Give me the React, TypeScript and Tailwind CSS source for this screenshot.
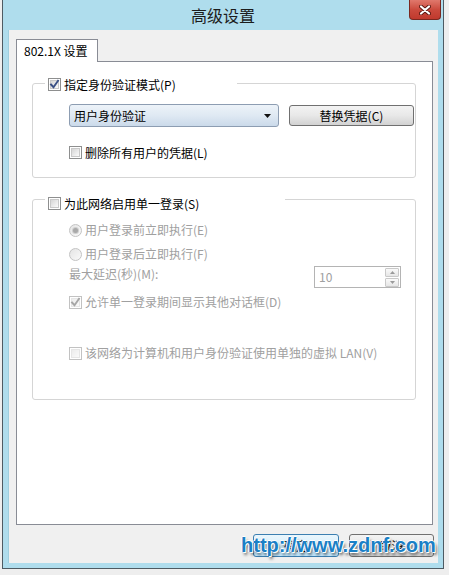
import React from "react";

function Check({ checked = false, disabled = false }: { checked?: boolean; disabled?: boolean }) {
  return (
    <span
      className={`relative inline-block w-[13px] h-[13px] shrink-0 border bg-white ${
        disabled ? "border-[#c2c2c2]" : "border-[#8e8f8f]"
      }`}
    >
      <span
        className={`absolute inset-[1px] border ${
          disabled
            ? "border-[#e6e6e6] bg-gradient-to-br from-[#ececec] to-[#fafafa]"
            : "border-[#c9c9c9] bg-gradient-to-br from-[#d6d6d6] to-[#fbfbfb]"
        }`}
      />
      {checked && (
        <svg className="absolute inset-0" width="11" height="11" viewBox="0 0 11 11">
          <path
            d="M2 5.5 L4.5 8.2 L9 1.8"
            fill="none"
            stroke={disabled ? "#a6a6a6" : "#3a5085"}
            strokeWidth="1.9"
            strokeLinecap="square"
          />
        </svg>
      )}
    </span>
  );
}

function Radio({ checked = false }: { checked?: boolean }) {
  return (
    <span className="relative inline-block w-[13px] h-[13px] shrink-0 rounded-full border border-[#c3c3c3] bg-gradient-to-br from-[#e4e4e4] to-[#fafafa]">
      {checked && (
        <span className="absolute left-[3px] top-[3px] w-[5px] h-[5px] rounded-full bg-[#a9a9a9] ring-1 ring-[#cfcfcf]" />
      )}
    </span>
  );
}

export default function App() {
  return (
    <div className="w-[449px] h-[575px] bg-[#eeeeee] overflow-hidden [font-family:'Noto_Sans_CJK_SC',sans-serif] text-[12px] leading-[16px] text-black">
      <div className="relative ml-[2px] w-[442px] h-[569px] border-x border-b border-[#4e5b63] bg-[#afdded] flex flex-col px-[5px] pb-[5px]">
        {/* title bar */}
        <div className="h-[30px] shrink-0 flex items-center justify-center text-[16px] leading-[20px] text-[#1c1c1c]">
          高级设置
        </div>
        <div className="absolute top-0 right-[2px] w-[32px] h-[20px] rounded-b-[4px] border border-t-0 border-[#7a2820] bg-gradient-to-b from-[#e0786c] via-[#cb4a3d] to-[#c0392d] flex items-center justify-center">
          <svg width="12" height="10" viewBox="0 0 12 10">
            <path d="M2 1.5 L10 8.5 M10 1.5 L2 8.5" stroke="#5b1710" strokeWidth="4" strokeLinecap="round" />
            <path d="M2 1.5 L10 8.5 M10 1.5 L2 8.5" stroke="#ffffff" strokeWidth="2.2" strokeLinecap="round" />
          </svg>
        </div>

        {/* client area */}
        <div className="flex-1 bg-[#f0f0f0] flex flex-col pl-[7px] pr-[5px] pt-[9px] pb-[6px] border-l border-[#9fcfdf]">
          {/* tab header */}
          <div className="flex">
            <div className="relative z-10 -mb-[1px] h-[23px] w-[82px] border border-b-0 border-[#898c95] bg-white flex items-center pl-[7px]">
              802.1X 设置
            </div>
          </div>
          {/* tab panel */}
          <div className="h-[464px] border border-[#898c95] bg-white pl-[15px] pr-[16px] pt-[21px]">
            {/* group 1 */}
            <div className="relative h-[95px] border border-[#d5d5d5] rounded-[3px] pt-[20px] pl-[36px]">
              <div className="absolute left-[12px] top-[-6px] w-[192px] h-[13px] bg-white pl-[3px] flex items-center gap-[3px]">
                <Check checked />
                <span>指定身份验证模式(P)</span>
              </div>
              <div className="flex items-center gap-[10px] h-[23px]">
                <div className="relative w-[210px] h-[23px] rounded-[3px] border border-[#8d9db2] bg-gradient-to-b from-[#edf3f9] via-[#dfe9f3] to-[#cbdaea] flex items-center pl-[4px]">
                  <span>用户身份验证</span>
                  <svg className="absolute right-[7px] top-[9px]" width="7" height="4" viewBox="0 0 7 4">
                    <path d="M0 0 H7 L3.5 4 Z" fill="#111" />
                  </svg>
                </div>
                <div className="w-[125px] h-[21px] rounded-[3px] border border-[#707070] bg-gradient-to-b from-[#f3f3f3] via-[#e8e8e8] to-[#d2d2d2] flex items-center justify-center">
                  替换凭据(C)
                </div>
              </div>
              <div className="mt-[19px] h-[13px] flex items-center gap-[3px]">
                <Check />
                <span>删除所有用户的凭据(L)</span>
              </div>
            </div>

            {/* group 2 */}
            <div className="relative mt-[21px] h-[201px] border border-[#d5d5d5] rounded-[3px] pt-[22px] pl-[36px] pr-[14px] text-[#a0a0a0]">
              <div className="absolute left-[12px] top-[-3px] w-[240px] h-[13px] bg-white pl-[3px] flex items-center gap-[3px] text-black">
                <Check />
                <span>为此网络启用单一登录(S)</span>
              </div>
              <div className="h-[16px] flex items-center gap-[3px]">
                <Radio checked />
                <span>用户登录前立即执行(E)</span>
              </div>
              <div className="mt-[8px] h-[16px] flex items-center gap-[3px]">
                <Radio />
                <span>用户登录后立即执行(F)</span>
              </div>
              <div className="mt-[4px] flex items-start justify-between">
                <span className="h-[16px]">最大延迟(秒)(M):</span>
                <div className="w-[87px] h-[22px] border border-[#b4b4b4] bg-white flex items-center pl-[4px] pr-[1px]">
                  <span className="flex-1 text-[#a0a0a0]">10</span>
                  <div className="flex flex-col gap-[1px]">
                    <div className="w-[14px] h-[9px] border border-[#c9c9c9] rounded-[1px] bg-gradient-to-b from-[#fafafa] to-[#e6e6e6] flex items-center justify-center">
                      <svg width="5" height="3" viewBox="0 0 5 3">
                        <path d="M0 3 H5 L2.5 0 Z" fill="#9a9a9a" />
                      </svg>
                    </div>
                    <div className="w-[14px] h-[9px] border border-[#c9c9c9] rounded-[1px] bg-gradient-to-b from-[#fafafa] to-[#e6e6e6] flex items-center justify-center">
                      <svg width="5" height="3" viewBox="0 0 5 3">
                        <path d="M0 0 H5 L2.5 3 Z" fill="#9a9a9a" />
                      </svg>
                    </div>
                  </div>
                </div>
              </div>
              <div className="mt-[6px] h-[16px] flex items-center gap-[3px]">
                <Check checked disabled />
                <span>允许单一登录期间显示其他对话框(D)</span>
              </div>
              <div className="mt-[35px] h-[16px] flex items-center gap-[3px]">
                <Check disabled />
                <span>该网络为计算机和用户身份验证使用单独的虚拟 LAN(V)</span>
              </div>
            </div>
          </div>

          {/* bottom buttons */}
          <div className="relative mt-[9px] h-[23px] flex justify-end gap-[10px] -mr-[1px]">
            <div className="w-[86px] h-[23px] rounded-[3px] border border-[#3c7fb1] bg-gradient-to-b from-[#eaf6fd] via-[#d9f0fc] to-[#bee6fd] flex items-center justify-center">
              确定
            </div>
            <div className="w-[85px] h-[23px] rounded-[3px] border border-[#707070] bg-gradient-to-b from-[#f3f3f3] via-[#e8e8e8] to-[#d2d2d2] flex items-center justify-center">
              取消
            </div>
            <div className="absolute left-[225px] top-0 z-20 [font-family:'Liberation_Sans',Arial,sans-serif] font-bold text-[20px] leading-[23px] text-[#1a80c6] whitespace-nowrap [text-shadow:1px_1px_0_#ffffff,-1px_0_0_#ffffff,0_-1px_0_#ffffff,2px_3px_3px_rgba(0,0,0,0.55)]">
              http://www.zdnf.com
            </div>
          </div>
        </div>
      </div>
    </div>
  );
}
